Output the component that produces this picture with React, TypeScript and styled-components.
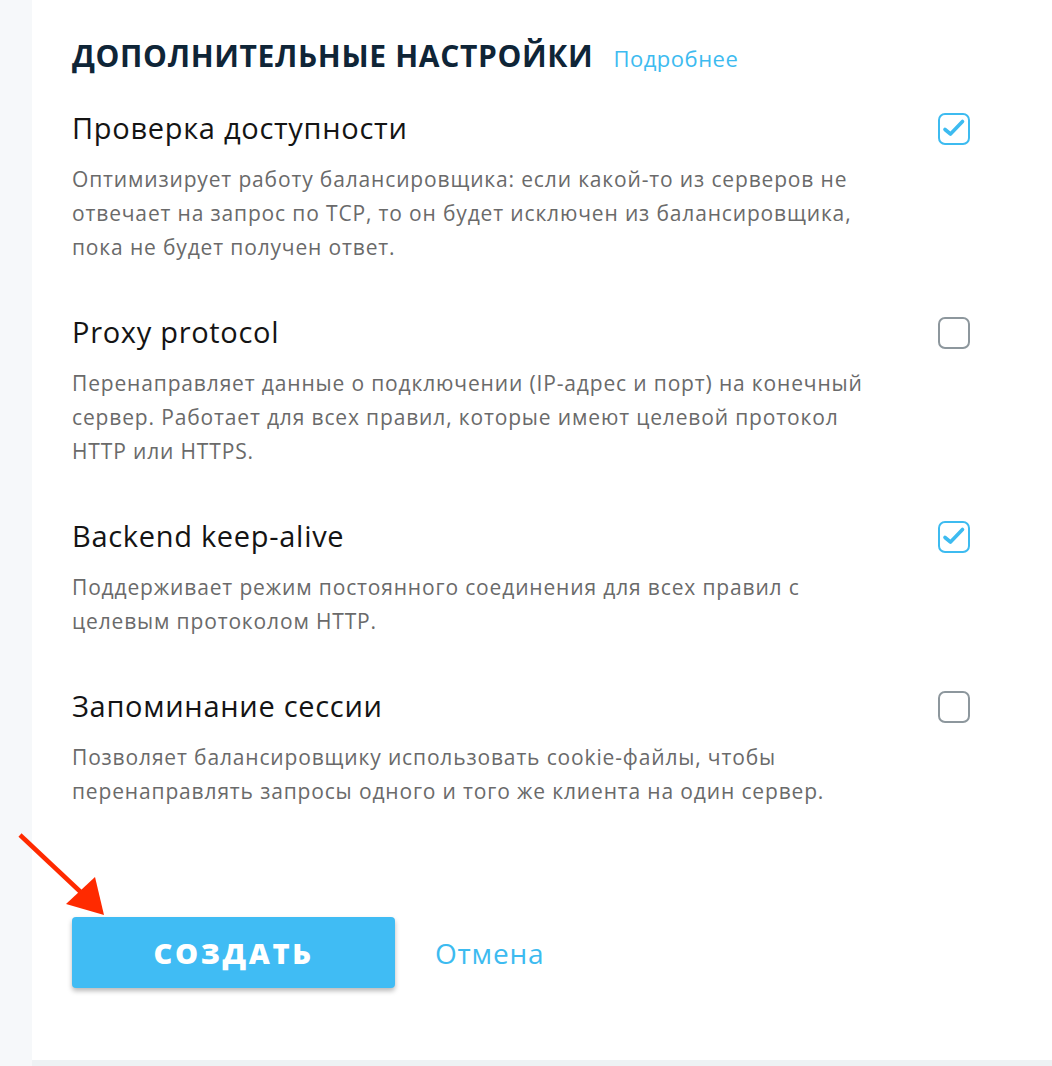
import styled, { createGlobalStyle } from "styled-components";

type Option = {
  id: string;
  title: string;
  description: string[];
  checked: boolean;
};

const options: Option[] = [
  {
    id: "health",
    title: "Проверка доступности",
    description: [
      "Оптимизирует работу балансировщика: если какой-то из серверов не",
      "отвечает на запрос по TCP, то он будет исключен из балансировщика,",
      "пока не будет получен ответ.",
    ],
    checked: true,
  },
  {
    id: "proxy",
    title: "Proxy protocol",
    description: [
      "Перенаправляет данные о подключении (IP-адрес и порт) на конечный",
      "сервер. Работает для всех правил, которые имеют целевой протокол",
      "HTTP или HTTPS.",
    ],
    checked: false,
  },
  {
    id: "keepalive",
    title: "Backend keep-alive",
    description: [
      "Поддерживает режим постоянного соединения для всех правил с",
      "целевым протоколом HTTP.",
    ],
    checked: true,
  },
  {
    id: "sticky",
    title: "Запоминание сессии",
    description: [
      "Позволяет балансировщику использовать cookie-файлы, чтобы",
      "перенаправлять запросы одного и того же клиента на один сервер.",
    ],
    checked: false,
  },
];

export default function App() {
  return (
    <>
      <GlobalStyle />
      <Page>
        <Card>
          <Header>
            <Title>ДОПОЛНИТЕЛЬНЫЕ НАСТРОЙКИ</Title>
            <MoreLink>Подробнее</MoreLink>
          </Header>
          <OptionList>
            {options.map((option) => (
              <OptionItem key={option.id}>
                <OptionText>
                  <OptionTitle>{option.title}</OptionTitle>
                  <OptionDescription>
                    {option.description.map((line) => (
                      <span key={line}>{line}</span>
                    ))}
                  </OptionDescription>
                </OptionText>
                <Checkbox checked={option.checked} />
              </OptionItem>
            ))}
          </OptionList>
          <Actions>
            <Arrow />
            <PrimaryButton>СОЗДАТЬ</PrimaryButton>
            <CancelLink>Отмена</CancelLink>
          </Actions>
        </Card>
      </Page>
    </>
  );
}

function Checkbox({ checked }: { checked: boolean }) {
  return (
    <CheckboxBox checked={checked}>
      {checked && (
        <svg width="24" height="24" viewBox="0 0 24 24" fill="none">
          <path
            d="M3 12.5 L8.5 17 L20.5 4.5"
            stroke="#3dbbf0"
            strokeWidth="3.6"
            strokeLinecap="round"
            strokeLinejoin="round"
          />
        </svg>
      )}
    </CheckboxBox>
  );
}

function Arrow() {
  return (
    <ArrowSvg width="100" height="100" viewBox="0 0 100 100">
      <line x1="4" y1="4" x2="70" y2="66" stroke="#ff2a00" strokeWidth="4.5" />
      <polygon points="88,84 79,46 50,73" fill="#ff2a00" />
    </ArrowSvg>
  );
}

const GlobalStyle = createGlobalStyle`
  body {
    margin: 0;
    background: #f5f7f9;
    font-family: "Open Sans", "Liberation Sans", Arial, sans-serif;
  }
`;

const Page = styled.div`
  display: flex;
  min-height: 1066px;
  padding-left: 32px;
  background: linear-gradient(to right, #f6f8fa 32px, #eef2f4 32px);
`;

const Card = styled.div`
  flex: 1;
  height: 1060px;
  box-sizing: border-box;
  background: #ffffff;
  padding: 38px 82px 0 40px;
  display: flex;
  flex-direction: column;
`;

const Header = styled.div`
  display: flex;
  align-items: baseline;
  gap: 20px;
`;

const Title = styled.h2`
  margin: 0;
  font-size: 30px;
  line-height: 36px;
  font-weight: 700;
  letter-spacing: 0.65px;
  color: #0f2537;
`;

const MoreLink = styled.a`
  font-size: 22px;
  letter-spacing: 0.5px;
  color: #3dbbf0;
  cursor: pointer;
`;

const OptionList = styled.div`
  display: flex;
  flex-direction: column;
  gap: 50px;
  margin-top: 36px;
`;

const OptionItem = styled.div`
  display: flex;
  justify-content: space-between;
  align-items: flex-start;
`;

const OptionText = styled.div`
  display: flex;
  flex-direction: column;
`;

const OptionTitle = styled.div`
  font-size: 29px;
  line-height: 36px;
  letter-spacing: 0.7px;
  color: #141414;
`;

const OptionDescription = styled.div`
  margin-top: 16px;
  display: flex;
  flex-direction: column;
  font-size: 21px;
  line-height: 34px;
  letter-spacing: 0.85px;
  color: #6a6a6a;
`;

const CheckboxBox = styled.div<{ checked: boolean }>`
  width: 32px;
  height: 32px;
  box-sizing: border-box;
  margin-top: 3px;
  border: 2px solid ${({ checked }) => (checked ? "#3dbbf0" : "#8d979d")};
  border-radius: 7px;
  display: flex;
  align-items: center;
  justify-content: center;
  flex-shrink: 0;
`;

const Actions = styled.div`
  position: relative;
  display: flex;
  align-items: center;
  gap: 40px;
  margin-top: 109px;
`;

const ArrowSvg = styled.svg`
  position: absolute;
  left: -56px;
  top: -86px;
`;

const PrimaryButton = styled.button`
  width: 323px;
  height: 71px;
  border: none;
  border-radius: 4px;
  background: #40bcf4;
  color: #ffffff;
  font-family: "Open Sans", "Liberation Sans", Arial, sans-serif;
  font-size: 29px;
  font-weight: 800;
  letter-spacing: 2.6px;
  box-shadow: 0 3px 5px rgba(0, 0, 0, 0.28);
  cursor: pointer;
`;

const CancelLink = styled.a`
  font-size: 28px;
  letter-spacing: 0.8px;
  color: #3dbbf0;
  cursor: pointer;
`;
